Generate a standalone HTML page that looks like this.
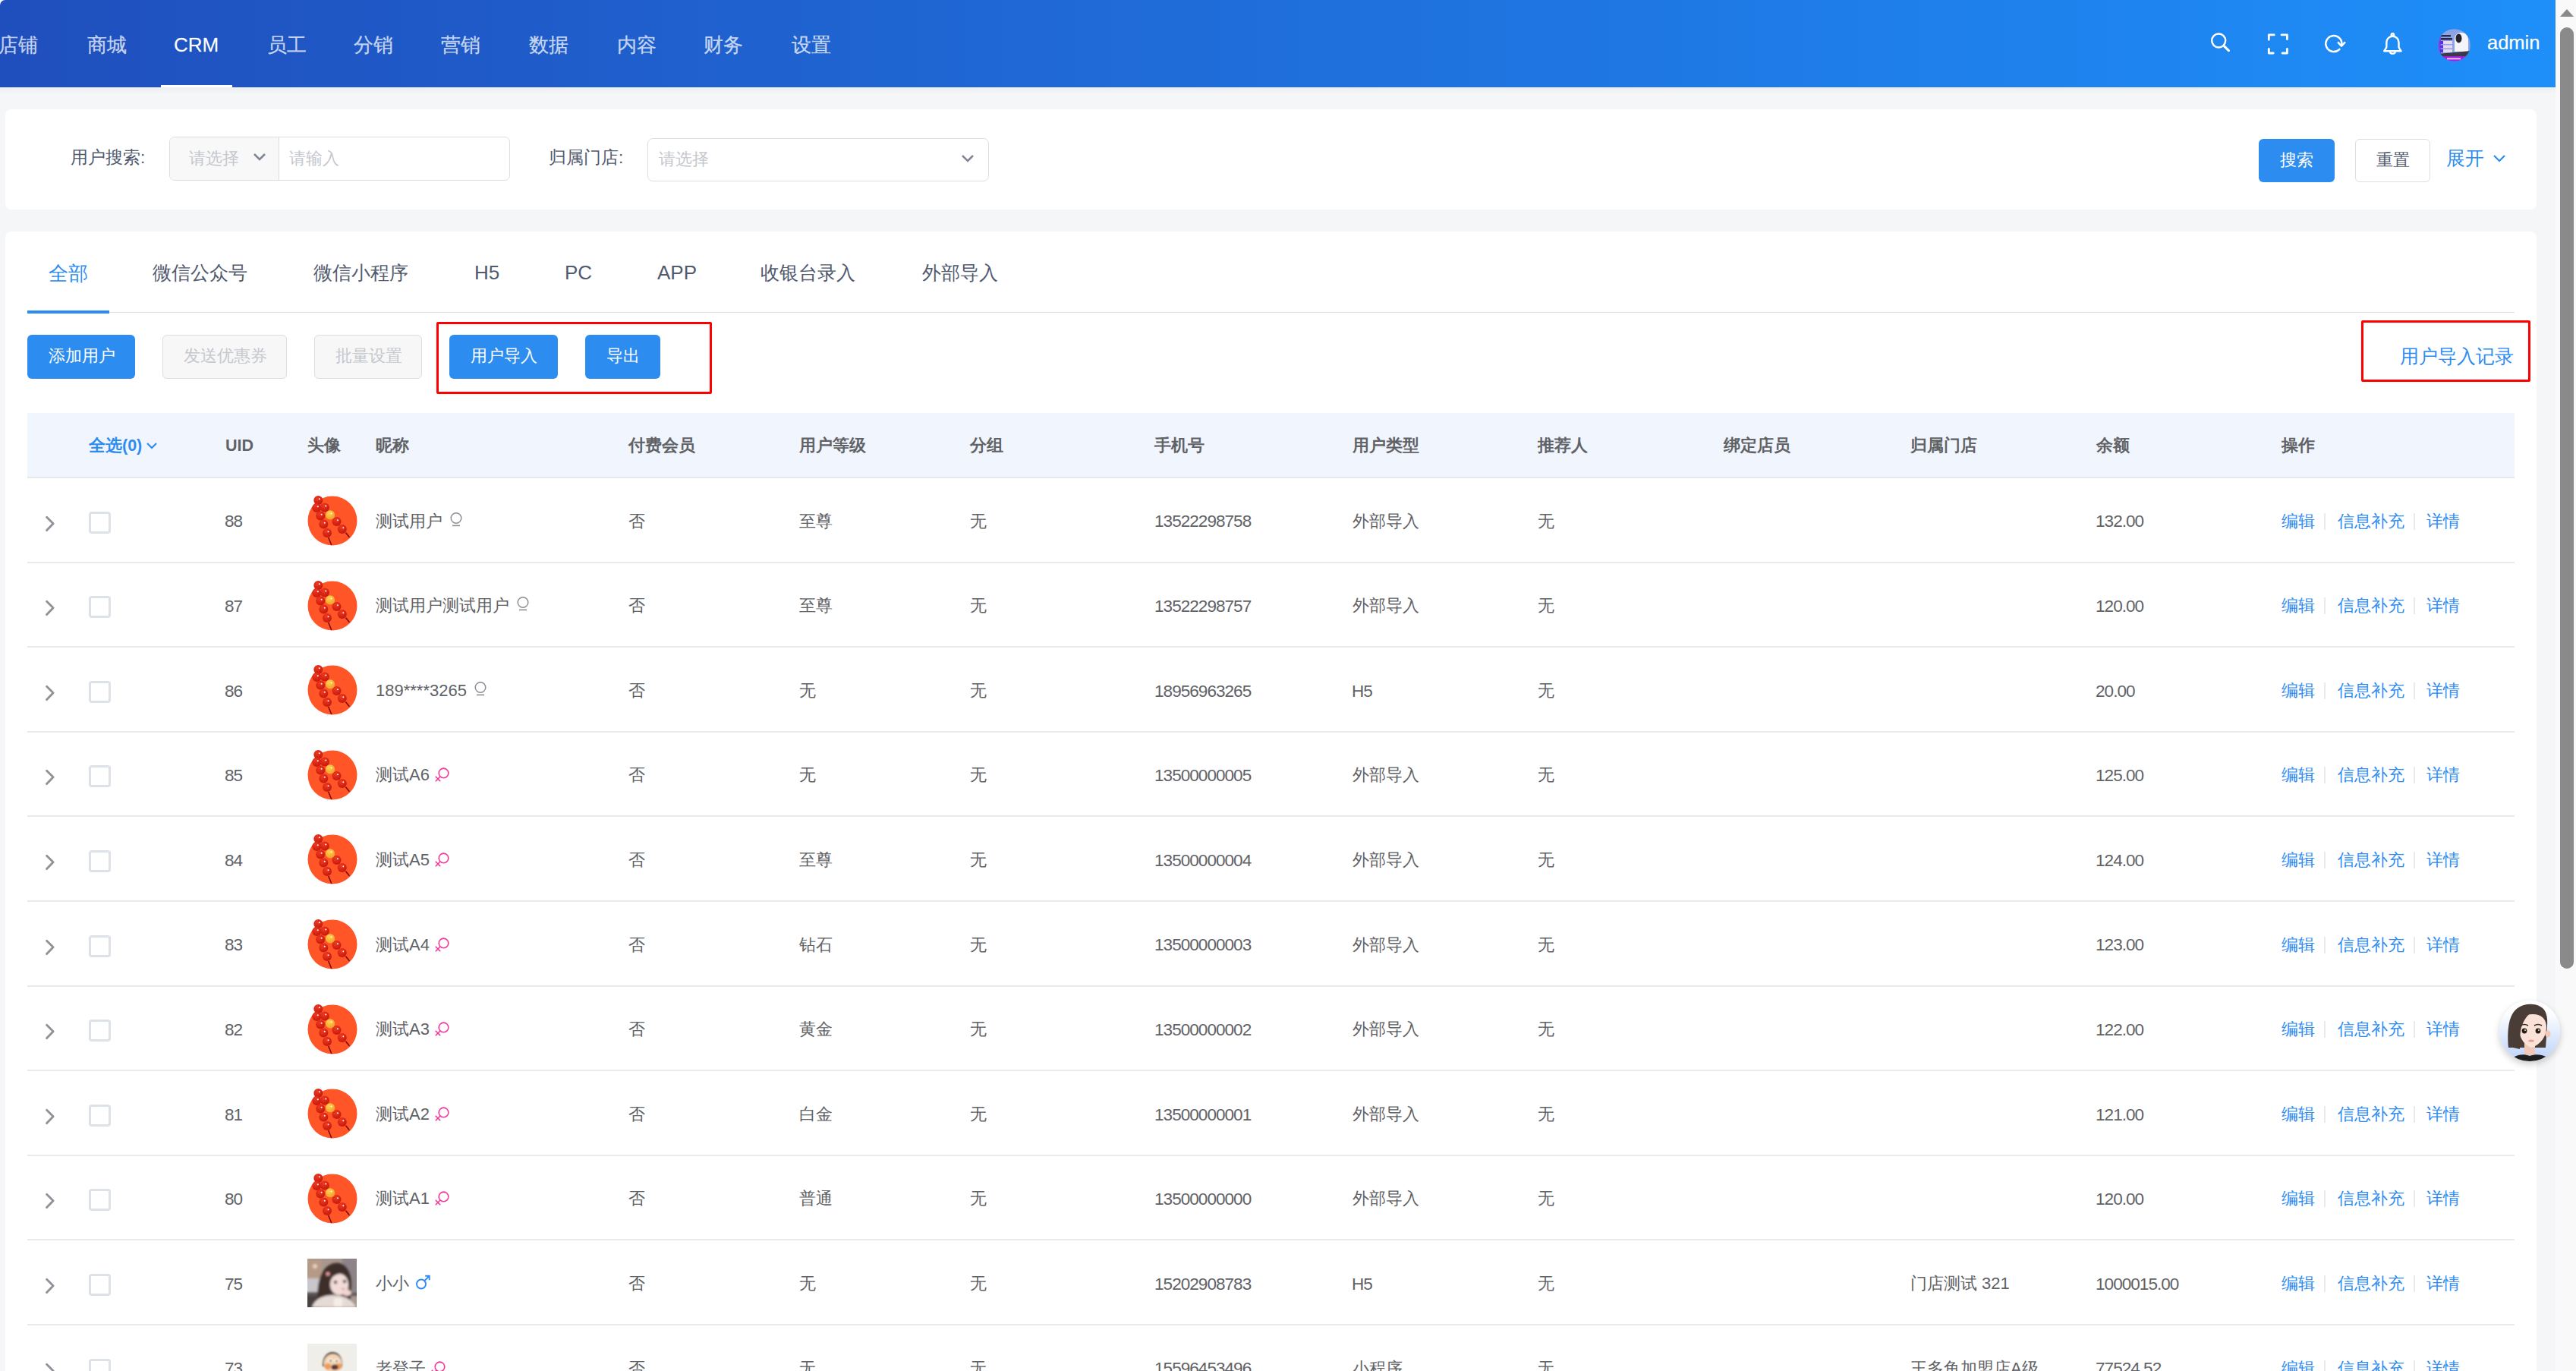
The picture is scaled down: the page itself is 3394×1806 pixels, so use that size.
<!DOCTYPE html><html><head><meta charset="utf-8"><title>CRM</title><style>
*{margin:0;padding:0;box-sizing:border-box}
html,body{width:3394px;height:1806px;overflow:hidden}
body{position:relative;background:#f5f6f8;font-family:"Liberation Sans",sans-serif;color:#515a6e}
.a{position:absolute;white-space:nowrap}
.t{position:absolute;white-space:nowrap;line-height:1}
#hdr{position:absolute;left:0;top:0;width:3367px;height:115px;background:linear-gradient(90deg,#1f4fbd 0%,#1f6bd8 45%,#1e8ff9 100%);border-top-left-radius:7px}
#hdrsh{position:absolute;left:0;top:115px;width:3367px;height:9px;background:linear-gradient(#eceef1,rgba(245,246,248,0))}
.nav{font-size:26px;color:rgba(255,255,255,0.74);top:46px;-webkit-text-stroke:0.3px rgba(255,255,255,0.5)}
.card{position:absolute;background:#fff;border-radius:8px}
.lbl{font-size:22.5px;color:#515a6e}
.ph{font-size:22px;color:#c5c8ce}
.btn{position:absolute;border-radius:6px;background:#2d8cf0;color:#fff}
.btnd{position:absolute;border-radius:6px;background:#f7f7f7;border:1.5px solid #dcdee2;color:#c5c8ce}
.tab{font-size:26px;color:#515a6e;top:347px}
.th{font-size:21.5px;font-weight:bold;color:#606266;top:577px}
.td{font-size:22px;color:#606266}
.num{font-size:22.5px;color:#606266;letter-spacing:-0.95px}
.lnk{font-size:22px;color:#2d8cf0}
.sep{position:absolute;width:2px;height:22px;background:#e8eaec}
.rb{position:absolute;height:2px;background:#e9eaed;left:36px;width:3277px}
.cb{position:absolute;width:29px;height:29px;border:3px solid #dde1e8;border-radius:4px;background:#fff}
</style></head><body><div id="hdr"></div><div id="hdrsh"></div><div class="t nav" style="left:-2px;right:auto;">店铺</div><div class="t nav" style="left:115px">商城</div><div class="t nav" style="left:229px;top:46px;color:#fff">CRM</div><div class="t nav" style="left:352px">员工</div><div class="t nav" style="left:466px">分销</div><div class="t nav" style="left:581px">营销</div><div class="t nav" style="left:697px">数据</div><div class="t nav" style="left:813px">内容</div><div class="t nav" style="left:927px">财务</div><div class="t nav" style="left:1043px">设置</div><div class="a" style="left:212px;top:112px;width:94px;height:3px;background:#fff"></div><svg class="a" style="left:2905px;top:38px" width="45" height="40" viewBox="0 0 45 40" fill="none" stroke="#fff"><circle cx="18.2" cy="15.5" r="9" stroke-width="2.4"/><line x1="24.8" y1="22.2" x2="31.4" y2="28.6" stroke-width="3.2" stroke-linecap="round"/></svg><svg class="a" style="left:2980px;top:38px" width="45" height="40" viewBox="0 0 45 40" fill="none" stroke="#fff" stroke-width="2.8" stroke-linecap="round" stroke-linejoin="round"><path d="M9.3 14.3V7.9H16.2M26 7.9H33.4V13.7M9.3 26.3V32H15.2M33.4 26.3V32H27.1"/></svg><svg class="a" style="left:3055px;top:38px" width="45" height="40" viewBox="0 0 45 40" fill="none" stroke="#fff" stroke-width="2.5" stroke-linecap="round" stroke-linejoin="round"><path d="M30.2 21.4A10.5 10.5 0 1 0 27.4 26.9"/><path d="M25.8 18.2L30 22.6L34.3 18.2"/></svg><svg class="a" style="left:3130px;top:36px" width="45" height="40" viewBox="0 0 45 40" fill="none" stroke="#fff" stroke-width="2.4" stroke-linejoin="round"><path d="M14.3 26.3V19.8A8.1 8.1 0 0 1 30.5 19.8V26.3L33.6 31.3H11.2Z"/><circle cx="22.4" cy="10" r="1.7"/><path d="M18.8 32.2A3.7 3.2 0 0 0 26 32.2"/></svg><svg class="a" style="left:3212px;top:38px" width="43" height="43" viewBox="0 0 43 43"><defs><clipPath id="hc"><circle cx="21.5" cy="21.5" r="21.3"/></clipPath></defs><g clip-path="url(#hc)"><rect width="43" height="43" fill="#8ba4e6"/><rect x="0" y="0" width="4" height="43" fill="#6a4ee0"/><rect x="4" y="8" width="13" height="2.4" fill="#2a2a50"/><rect x="4" y="12" width="15" height="2.6" fill="#2a2a50"/><rect x="3" y="16" width="16" height="4" fill="#e8d8f0"/><rect x="3" y="16" width="4" height="4" fill="#5a2cf0"/><rect x="3" y="21.5" width="16" height="4" fill="#e8d8f0"/><rect x="3" y="21.5" width="4" height="4" fill="#5a2cf0"/><rect x="3" y="27" width="16" height="4" fill="#e8d8f0"/><rect x="3" y="27" width="4" height="4" fill="#5a2cf0"/><path d="M22 30V14C22 8 26 5 31 5C37 5 40 9 40 15V30Z" fill="#f4f4fa"/><ellipse cx="27.5" cy="12.5" rx="4" ry="6" fill="#222230"/><path d="M0 33L43 29V36L0 38Z" fill="#3a3a48"/><rect x="0" y="36" width="43" height="7" fill="#a21ee0"/><rect x="12" y="38.5" width="18" height="1.8" fill="#f0d8f8"/></g></svg><div class="t" style="left:3277px;top:44px;font-size:25.5px;color:#fff;-webkit-text-stroke:0.2px #fff">admin</div><div class="card" style="left:7px;top:144px;width:3335px;height:132px"></div><div class="t lbl" style="left:93px;top:197px">用户搜索:</div><div class="a" style="left:223px;top:180px;width:449px;height:58px;border:1.5px solid #dcdee2;border-radius:7px;background:#fff"></div><div class="a" style="left:224px;top:181px;width:144px;height:56px;border-right:1.5px solid #dcdee2;border-radius:6px 0 0 6px;background:#f8f8f9"></div><div class="t ph" style="left:249px;top:198px">请选择</div><svg class="a" style="left:332px;top:200px" width="20" height="14" viewBox="0 0 20 14" fill="none" stroke="#808695" stroke-width="2.6"><path d="M3 3L10 10L17 3"/></svg><div class="t ph" style="left:381px;top:198px">请输入</div><div class="t lbl" style="left:723px;top:197px">归属门店:</div><div class="a" style="left:853px;top:182px;width:450px;height:57px;border:1.5px solid #dcdee2;border-radius:7px;background:#fff"></div><div class="t ph" style="left:868px;top:199px">请选择</div><svg class="a" style="left:1265px;top:202px" width="20" height="14" viewBox="0 0 20 14" fill="none" stroke="#808695" stroke-width="2.6"><path d="M3 3L10 10L17 3"/></svg><div class="btn" style="left:2976px;top:183px;width:100px;height:57px"></div><div class="t" style="left:3004px;top:200px;font-size:22px;color:#fff">搜索</div><div class="a" style="left:3103px;top:183px;width:99px;height:57px;border:1.5px solid #dcdee2;border-radius:6px;background:#fff"></div><div class="t" style="left:3131px;top:200px;font-size:22px;color:#515a6e">重置</div><div class="t" style="left:3223px;top:196px;font-size:25px;color:#2d8cf0">展开</div><svg class="a" style="left:3283px;top:202px" width="20" height="14" viewBox="0 0 20 14" fill="none" stroke="#2d8cf0" stroke-width="2.2"><path d="M3 3L10 10L17 3"/></svg><div class="card" style="left:7px;top:305px;width:3335px;height:1600px"></div><div class="t tab" style="left:64px;top:347px;font-size:26px;color:#2d8cf0">全部</div><div class="t tab" style="left:201px;top:347px;font-size:25px">微信公众号</div><div class="t tab" style="left:413px;top:347px;font-size:25px">微信小程序</div><div class="t tab" style="left:625px;top:346px;font-size:26px">H5</div><div class="t tab" style="left:744px;top:346px;font-size:26px">PC</div><div class="t tab" style="left:866px;top:346px;font-size:26px">APP</div><div class="t tab" style="left:1002px;top:347px;font-size:25px">收银台录入</div><div class="t tab" style="left:1215px;top:347px;font-size:25px">外部导入</div><div class="a" style="left:36px;top:411px;width:3277px;height:1px;background:#dcdee2"></div><div class="a" style="left:36px;top:409px;width:108px;height:4px;background:#2d8cf0"></div><div class="btn" style="left:36px;top:441px;width:142px;height:58px"></div><div class="t" style="left:64px;top:458px;font-size:22px;color:#fff">添加用户</div><div class="btnd" style="left:214px;top:441px;width:164px;height:58px"></div><div class="t" style="left:242px;top:458px;font-size:22px;color:#c5c8ce">发送优惠券</div><div class="btnd" style="left:414px;top:441px;width:142px;height:58px"></div><div class="t" style="left:442px;top:458px;font-size:22px;color:#c5c8ce">批量设置</div><div class="a" style="left:575px;top:424px;width:363px;height:95px;border:3.5px solid #f00;border-radius:2px"></div><div class="btn" style="left:592px;top:441px;width:143px;height:58px"></div><div class="t" style="left:620px;top:458px;font-size:22px;color:#fff">用户导入</div><div class="btn" style="left:771px;top:441px;width:99px;height:58px"></div><div class="t" style="left:799px;top:458px;font-size:22px;color:#fff">导出</div><div class="a" style="left:3111px;top:422px;width:223px;height:81px;border:3.5px solid #f00;border-radius:2px"></div><div class="t" style="left:3162px;top:457px;font-size:25px;color:#2d8cf0">用户导入记录</div><div class="a" style="left:36px;top:544px;width:3277px;height:86px;background:#f1f6fe;border-bottom:2px solid #e6e8eb"></div><div class="t th" style="left:117px;color:#2d8cf0">全选(0)</div><svg class="a" style="left:192px;top:581px" width="16" height="12" viewBox="0 0 16 12" fill="none" stroke="#2d8cf0" stroke-width="2.2"><path d="M2 3L8 9L14 3"/></svg><div class="t th" style="left:297px">UID</div><div class="t th" style="left:405px">头像</div><div class="t th" style="left:495px">昵称</div><div class="t th" style="left:828px">付费会员</div><div class="t th" style="left:1053px">用户等级</div><div class="t th" style="left:1278px">分组</div><div class="t th" style="left:1521px">手机号</div><div class="t th" style="left:1782px">用户类型</div><div class="t th" style="left:2026px">推荐人</div><div class="t th" style="left:2271px">绑定店员</div><div class="t th" style="left:2517px">归属门店</div><div class="t th" style="left:2762px">余额</div><div class="t th" style="left:3006px">操作</div><svg class="a" style="left:58px;top:674px" width="18" height="28" viewBox="0 0 18 28" fill="none" stroke="#8f9299" stroke-width="2.9" stroke-linecap="round" stroke-linejoin="round"><path d="M3.6 7.3L12.1 15.8L3.6 24.6"/></svg><div class="cb" style="left:117px;top:674px"></div><div class="t num" style="left:296px;top:676px">88</div><svg class="a" style="left:405px;top:653px" width="66" height="66" viewBox="0 0 66 66"><defs><radialGradient id="rb" cx="0.4" cy="0.3" r="0.7"><stop offset="0" stop-color="#ee3a20"/><stop offset="1" stop-color="#c8170e"/></radialGradient><radialGradient id="yb" cx="0.4" cy="0.3" r="0.7"><stop offset="0" stop-color="#fdd24e"/><stop offset="1" stop-color="#f2a12a"/></radialGradient></defs><circle cx="33" cy="33" r="32.5" fill="#ff5527"/><line x1="27.7" y1="55" x2="31.8" y2="65" stroke="#7a0a0a" stroke-width="1.6"/><line x1="50.5" y1="48.7" x2="55.4" y2="54.8" stroke="#7a0a0a" stroke-width="1.6"/><circle cx="14.3" cy="6.1" r="6" fill="url(#rb)"/><circle cx="15.8" cy="4.3" r="1" fill="#fff"/><circle cx="12.3" cy="16" r="6" fill="url(#rb)"/><circle cx="13.8" cy="14.2" r="1" fill="#fff"/><circle cx="22.8" cy="15.4" r="6" fill="url(#rb)"/><circle cx="24.3" cy="13.6" r="1" fill="#fff"/><circle cx="17.2" cy="26.5" r="6" fill="url(#rb)"/><circle cx="18.7" cy="24.7" r="1" fill="#fff"/><circle cx="21.3" cy="37.6" r="6" fill="url(#rb)"/><circle cx="22.8" cy="35.800000000000004" r="1" fill="#fff"/><circle cx="38.5" cy="34.1" r="6" fill="url(#rb)"/><circle cx="40.0" cy="32.300000000000004" r="1" fill="#fff"/><circle cx="26" cy="49" r="6" fill="url(#rb)"/><circle cx="27.5" cy="47.2" r="1" fill="#fff"/><circle cx="45.8" cy="44" r="6" fill="url(#rb)"/><circle cx="47.3" cy="42.2" r="1" fill="#fff"/><circle cx="30.1" cy="25.4" r="6.1" fill="url(#yb)"/><circle cx="31.6" cy="23.6" r="1" fill="#fff"/></svg><div class="t td" style="left:495px;top:676px">测试用户<svg style="position:relative;margin-left:9px;top:-1px;vertical-align:top" width="18" height="22" viewBox="0 0 18 22" fill="none" stroke="#8d8f94" stroke-width="1.5"><circle cx="9" cy="7.5" r="6.8"/><line x1="4" y1="17.4" x2="14" y2="17.4" stroke-width="1.6"/></svg></div><div class="t td" style="left:828px;top:676px">否</div><div class="t td" style="left:1053px;top:676px">至尊</div><div class="t td" style="left:1278px;top:676px">无</div><div class="t num" style="left:1521px;top:676px">13522298758</div><div class="t td" style="left:1782px;top:676px">外部导入</div><div class="t td" style="left:2026px;top:676px">无</div><div class="t num" style="left:2761px;top:676px">132.00</div><div class="t lnk" style="left:3006px;top:676px">编辑</div><div class="sep" style="left:3062px;top:676px"></div><div class="t lnk" style="left:3080px;top:676px">信息补充</div><div class="sep" style="left:3180px;top:676px"></div><div class="t lnk" style="left:3197px;top:676px">详情</div><div class="rb" style="top:740px"></div><svg class="a" style="left:58px;top:785px" width="18" height="28" viewBox="0 0 18 28" fill="none" stroke="#8f9299" stroke-width="2.9" stroke-linecap="round" stroke-linejoin="round"><path d="M3.6 7.3L12.1 15.8L3.6 24.6"/></svg><div class="cb" style="left:117px;top:785px"></div><div class="t num" style="left:296px;top:788px">87</div><svg class="a" style="left:405px;top:765px" width="66" height="66" viewBox="0 0 66 66"><defs><radialGradient id="rb" cx="0.4" cy="0.3" r="0.7"><stop offset="0" stop-color="#ee3a20"/><stop offset="1" stop-color="#c8170e"/></radialGradient><radialGradient id="yb" cx="0.4" cy="0.3" r="0.7"><stop offset="0" stop-color="#fdd24e"/><stop offset="1" stop-color="#f2a12a"/></radialGradient></defs><circle cx="33" cy="33" r="32.5" fill="#ff5527"/><line x1="27.7" y1="55" x2="31.8" y2="65" stroke="#7a0a0a" stroke-width="1.6"/><line x1="50.5" y1="48.7" x2="55.4" y2="54.8" stroke="#7a0a0a" stroke-width="1.6"/><circle cx="14.3" cy="6.1" r="6" fill="url(#rb)"/><circle cx="15.8" cy="4.3" r="1" fill="#fff"/><circle cx="12.3" cy="16" r="6" fill="url(#rb)"/><circle cx="13.8" cy="14.2" r="1" fill="#fff"/><circle cx="22.8" cy="15.4" r="6" fill="url(#rb)"/><circle cx="24.3" cy="13.6" r="1" fill="#fff"/><circle cx="17.2" cy="26.5" r="6" fill="url(#rb)"/><circle cx="18.7" cy="24.7" r="1" fill="#fff"/><circle cx="21.3" cy="37.6" r="6" fill="url(#rb)"/><circle cx="22.8" cy="35.800000000000004" r="1" fill="#fff"/><circle cx="38.5" cy="34.1" r="6" fill="url(#rb)"/><circle cx="40.0" cy="32.300000000000004" r="1" fill="#fff"/><circle cx="26" cy="49" r="6" fill="url(#rb)"/><circle cx="27.5" cy="47.2" r="1" fill="#fff"/><circle cx="45.8" cy="44" r="6" fill="url(#rb)"/><circle cx="47.3" cy="42.2" r="1" fill="#fff"/><circle cx="30.1" cy="25.4" r="6.1" fill="url(#yb)"/><circle cx="31.6" cy="23.6" r="1" fill="#fff"/></svg><div class="t td" style="left:495px;top:787px">测试用户测试用户<svg style="position:relative;margin-left:9px;top:-1px;vertical-align:top" width="18" height="22" viewBox="0 0 18 22" fill="none" stroke="#8d8f94" stroke-width="1.5"><circle cx="9" cy="7.5" r="6.8"/><line x1="4" y1="17.4" x2="14" y2="17.4" stroke-width="1.6"/></svg></div><div class="t td" style="left:828px;top:787px">否</div><div class="t td" style="left:1053px;top:787px">至尊</div><div class="t td" style="left:1278px;top:787px">无</div><div class="t num" style="left:1521px;top:788px">13522298757</div><div class="t td" style="left:1782px;top:787px">外部导入</div><div class="t td" style="left:2026px;top:787px">无</div><div class="t num" style="left:2761px;top:788px">120.00</div><div class="t lnk" style="left:3006px;top:787px">编辑</div><div class="sep" style="left:3062px;top:787px"></div><div class="t lnk" style="left:3080px;top:787px">信息补充</div><div class="sep" style="left:3180px;top:787px"></div><div class="t lnk" style="left:3197px;top:787px">详情</div><div class="rb" style="top:851px"></div><svg class="a" style="left:58px;top:897px" width="18" height="28" viewBox="0 0 18 28" fill="none" stroke="#8f9299" stroke-width="2.9" stroke-linecap="round" stroke-linejoin="round"><path d="M3.6 7.3L12.1 15.8L3.6 24.6"/></svg><div class="cb" style="left:117px;top:897px"></div><div class="t num" style="left:296px;top:900px">86</div><svg class="a" style="left:405px;top:876px" width="66" height="66" viewBox="0 0 66 66"><defs><radialGradient id="rb" cx="0.4" cy="0.3" r="0.7"><stop offset="0" stop-color="#ee3a20"/><stop offset="1" stop-color="#c8170e"/></radialGradient><radialGradient id="yb" cx="0.4" cy="0.3" r="0.7"><stop offset="0" stop-color="#fdd24e"/><stop offset="1" stop-color="#f2a12a"/></radialGradient></defs><circle cx="33" cy="33" r="32.5" fill="#ff5527"/><line x1="27.7" y1="55" x2="31.8" y2="65" stroke="#7a0a0a" stroke-width="1.6"/><line x1="50.5" y1="48.7" x2="55.4" y2="54.8" stroke="#7a0a0a" stroke-width="1.6"/><circle cx="14.3" cy="6.1" r="6" fill="url(#rb)"/><circle cx="15.8" cy="4.3" r="1" fill="#fff"/><circle cx="12.3" cy="16" r="6" fill="url(#rb)"/><circle cx="13.8" cy="14.2" r="1" fill="#fff"/><circle cx="22.8" cy="15.4" r="6" fill="url(#rb)"/><circle cx="24.3" cy="13.6" r="1" fill="#fff"/><circle cx="17.2" cy="26.5" r="6" fill="url(#rb)"/><circle cx="18.7" cy="24.7" r="1" fill="#fff"/><circle cx="21.3" cy="37.6" r="6" fill="url(#rb)"/><circle cx="22.8" cy="35.800000000000004" r="1" fill="#fff"/><circle cx="38.5" cy="34.1" r="6" fill="url(#rb)"/><circle cx="40.0" cy="32.300000000000004" r="1" fill="#fff"/><circle cx="26" cy="49" r="6" fill="url(#rb)"/><circle cx="27.5" cy="47.2" r="1" fill="#fff"/><circle cx="45.8" cy="44" r="6" fill="url(#rb)"/><circle cx="47.3" cy="42.2" r="1" fill="#fff"/><circle cx="30.1" cy="25.4" r="6.1" fill="url(#yb)"/><circle cx="31.6" cy="23.6" r="1" fill="#fff"/></svg><div class="t td" style="left:495px;top:899px">189****3265<svg style="position:relative;margin-left:9px;top:-1px;vertical-align:top" width="18" height="22" viewBox="0 0 18 22" fill="none" stroke="#8d8f94" stroke-width="1.5"><circle cx="9" cy="7.5" r="6.8"/><line x1="4" y1="17.4" x2="14" y2="17.4" stroke-width="1.6"/></svg></div><div class="t td" style="left:828px;top:899px">否</div><div class="t td" style="left:1053px;top:899px">无</div><div class="t td" style="left:1278px;top:899px">无</div><div class="t num" style="left:1521px;top:900px">18956963265</div><div class="t num" style="left:1781px;top:900px">H5</div><div class="t td" style="left:2026px;top:899px">无</div><div class="t num" style="left:2761px;top:900px">20.00</div><div class="t lnk" style="left:3006px;top:899px">编辑</div><div class="sep" style="left:3062px;top:899px"></div><div class="t lnk" style="left:3080px;top:899px">信息补充</div><div class="sep" style="left:3180px;top:899px"></div><div class="t lnk" style="left:3197px;top:899px">详情</div><div class="rb" style="top:963px"></div><svg class="a" style="left:58px;top:1008px" width="18" height="28" viewBox="0 0 18 28" fill="none" stroke="#8f9299" stroke-width="2.9" stroke-linecap="round" stroke-linejoin="round"><path d="M3.6 7.3L12.1 15.8L3.6 24.6"/></svg><div class="cb" style="left:117px;top:1008px"></div><div class="t num" style="left:296px;top:1011px">85</div><svg class="a" style="left:405px;top:988px" width="66" height="66" viewBox="0 0 66 66"><defs><radialGradient id="rb" cx="0.4" cy="0.3" r="0.7"><stop offset="0" stop-color="#ee3a20"/><stop offset="1" stop-color="#c8170e"/></radialGradient><radialGradient id="yb" cx="0.4" cy="0.3" r="0.7"><stop offset="0" stop-color="#fdd24e"/><stop offset="1" stop-color="#f2a12a"/></radialGradient></defs><circle cx="33" cy="33" r="32.5" fill="#ff5527"/><line x1="27.7" y1="55" x2="31.8" y2="65" stroke="#7a0a0a" stroke-width="1.6"/><line x1="50.5" y1="48.7" x2="55.4" y2="54.8" stroke="#7a0a0a" stroke-width="1.6"/><circle cx="14.3" cy="6.1" r="6" fill="url(#rb)"/><circle cx="15.8" cy="4.3" r="1" fill="#fff"/><circle cx="12.3" cy="16" r="6" fill="url(#rb)"/><circle cx="13.8" cy="14.2" r="1" fill="#fff"/><circle cx="22.8" cy="15.4" r="6" fill="url(#rb)"/><circle cx="24.3" cy="13.6" r="1" fill="#fff"/><circle cx="17.2" cy="26.5" r="6" fill="url(#rb)"/><circle cx="18.7" cy="24.7" r="1" fill="#fff"/><circle cx="21.3" cy="37.6" r="6" fill="url(#rb)"/><circle cx="22.8" cy="35.800000000000004" r="1" fill="#fff"/><circle cx="38.5" cy="34.1" r="6" fill="url(#rb)"/><circle cx="40.0" cy="32.300000000000004" r="1" fill="#fff"/><circle cx="26" cy="49" r="6" fill="url(#rb)"/><circle cx="27.5" cy="47.2" r="1" fill="#fff"/><circle cx="45.8" cy="44" r="6" fill="url(#rb)"/><circle cx="47.3" cy="42.2" r="1" fill="#fff"/><circle cx="30.1" cy="25.4" r="6.1" fill="url(#yb)"/><circle cx="31.6" cy="23.6" r="1" fill="#fff"/></svg><div class="t td" style="left:495px;top:1010px">测试A6<svg style="position:relative;margin-left:6px;top:1px;vertical-align:top" width="20" height="20" viewBox="0 0 20 20" fill="none" stroke="#f5379b" stroke-width="1.6"><circle cx="12.5" cy="7.4" r="6.3"/><line x1="8" y1="12" x2="1.8" y2="18.2"/><line x1="1.8" y1="11.8" x2="8.2" y2="18.2"/></svg></div><div class="t td" style="left:828px;top:1010px">否</div><div class="t td" style="left:1053px;top:1010px">无</div><div class="t td" style="left:1278px;top:1010px">无</div><div class="t num" style="left:1521px;top:1011px">13500000005</div><div class="t td" style="left:1782px;top:1010px">外部导入</div><div class="t td" style="left:2026px;top:1010px">无</div><div class="t num" style="left:2761px;top:1011px">125.00</div><div class="t lnk" style="left:3006px;top:1010px">编辑</div><div class="sep" style="left:3062px;top:1010px"></div><div class="t lnk" style="left:3080px;top:1010px">信息补充</div><div class="sep" style="left:3180px;top:1010px"></div><div class="t lnk" style="left:3197px;top:1010px">详情</div><div class="rb" style="top:1074px"></div><svg class="a" style="left:58px;top:1120px" width="18" height="28" viewBox="0 0 18 28" fill="none" stroke="#8f9299" stroke-width="2.9" stroke-linecap="round" stroke-linejoin="round"><path d="M3.6 7.3L12.1 15.8L3.6 24.6"/></svg><div class="cb" style="left:117px;top:1120px"></div><div class="t num" style="left:296px;top:1123px">84</div><svg class="a" style="left:405px;top:1099px" width="66" height="66" viewBox="0 0 66 66"><defs><radialGradient id="rb" cx="0.4" cy="0.3" r="0.7"><stop offset="0" stop-color="#ee3a20"/><stop offset="1" stop-color="#c8170e"/></radialGradient><radialGradient id="yb" cx="0.4" cy="0.3" r="0.7"><stop offset="0" stop-color="#fdd24e"/><stop offset="1" stop-color="#f2a12a"/></radialGradient></defs><circle cx="33" cy="33" r="32.5" fill="#ff5527"/><line x1="27.7" y1="55" x2="31.8" y2="65" stroke="#7a0a0a" stroke-width="1.6"/><line x1="50.5" y1="48.7" x2="55.4" y2="54.8" stroke="#7a0a0a" stroke-width="1.6"/><circle cx="14.3" cy="6.1" r="6" fill="url(#rb)"/><circle cx="15.8" cy="4.3" r="1" fill="#fff"/><circle cx="12.3" cy="16" r="6" fill="url(#rb)"/><circle cx="13.8" cy="14.2" r="1" fill="#fff"/><circle cx="22.8" cy="15.4" r="6" fill="url(#rb)"/><circle cx="24.3" cy="13.6" r="1" fill="#fff"/><circle cx="17.2" cy="26.5" r="6" fill="url(#rb)"/><circle cx="18.7" cy="24.7" r="1" fill="#fff"/><circle cx="21.3" cy="37.6" r="6" fill="url(#rb)"/><circle cx="22.8" cy="35.800000000000004" r="1" fill="#fff"/><circle cx="38.5" cy="34.1" r="6" fill="url(#rb)"/><circle cx="40.0" cy="32.300000000000004" r="1" fill="#fff"/><circle cx="26" cy="49" r="6" fill="url(#rb)"/><circle cx="27.5" cy="47.2" r="1" fill="#fff"/><circle cx="45.8" cy="44" r="6" fill="url(#rb)"/><circle cx="47.3" cy="42.2" r="1" fill="#fff"/><circle cx="30.1" cy="25.4" r="6.1" fill="url(#yb)"/><circle cx="31.6" cy="23.6" r="1" fill="#fff"/></svg><div class="t td" style="left:495px;top:1122px">测试A5<svg style="position:relative;margin-left:6px;top:1px;vertical-align:top" width="20" height="20" viewBox="0 0 20 20" fill="none" stroke="#f5379b" stroke-width="1.6"><circle cx="12.5" cy="7.4" r="6.3"/><line x1="8" y1="12" x2="1.8" y2="18.2"/><line x1="1.8" y1="11.8" x2="8.2" y2="18.2"/></svg></div><div class="t td" style="left:828px;top:1122px">否</div><div class="t td" style="left:1053px;top:1122px">至尊</div><div class="t td" style="left:1278px;top:1122px">无</div><div class="t num" style="left:1521px;top:1123px">13500000004</div><div class="t td" style="left:1782px;top:1122px">外部导入</div><div class="t td" style="left:2026px;top:1122px">无</div><div class="t num" style="left:2761px;top:1123px">124.00</div><div class="t lnk" style="left:3006px;top:1122px">编辑</div><div class="sep" style="left:3062px;top:1122px"></div><div class="t lnk" style="left:3080px;top:1122px">信息补充</div><div class="sep" style="left:3180px;top:1122px"></div><div class="t lnk" style="left:3197px;top:1122px">详情</div><div class="rb" style="top:1186px"></div><svg class="a" style="left:58px;top:1232px" width="18" height="28" viewBox="0 0 18 28" fill="none" stroke="#8f9299" stroke-width="2.9" stroke-linecap="round" stroke-linejoin="round"><path d="M3.6 7.3L12.1 15.8L3.6 24.6"/></svg><div class="cb" style="left:117px;top:1232px"></div><div class="t num" style="left:296px;top:1234px">83</div><svg class="a" style="left:405px;top:1211px" width="66" height="66" viewBox="0 0 66 66"><defs><radialGradient id="rb" cx="0.4" cy="0.3" r="0.7"><stop offset="0" stop-color="#ee3a20"/><stop offset="1" stop-color="#c8170e"/></radialGradient><radialGradient id="yb" cx="0.4" cy="0.3" r="0.7"><stop offset="0" stop-color="#fdd24e"/><stop offset="1" stop-color="#f2a12a"/></radialGradient></defs><circle cx="33" cy="33" r="32.5" fill="#ff5527"/><line x1="27.7" y1="55" x2="31.8" y2="65" stroke="#7a0a0a" stroke-width="1.6"/><line x1="50.5" y1="48.7" x2="55.4" y2="54.8" stroke="#7a0a0a" stroke-width="1.6"/><circle cx="14.3" cy="6.1" r="6" fill="url(#rb)"/><circle cx="15.8" cy="4.3" r="1" fill="#fff"/><circle cx="12.3" cy="16" r="6" fill="url(#rb)"/><circle cx="13.8" cy="14.2" r="1" fill="#fff"/><circle cx="22.8" cy="15.4" r="6" fill="url(#rb)"/><circle cx="24.3" cy="13.6" r="1" fill="#fff"/><circle cx="17.2" cy="26.5" r="6" fill="url(#rb)"/><circle cx="18.7" cy="24.7" r="1" fill="#fff"/><circle cx="21.3" cy="37.6" r="6" fill="url(#rb)"/><circle cx="22.8" cy="35.800000000000004" r="1" fill="#fff"/><circle cx="38.5" cy="34.1" r="6" fill="url(#rb)"/><circle cx="40.0" cy="32.300000000000004" r="1" fill="#fff"/><circle cx="26" cy="49" r="6" fill="url(#rb)"/><circle cx="27.5" cy="47.2" r="1" fill="#fff"/><circle cx="45.8" cy="44" r="6" fill="url(#rb)"/><circle cx="47.3" cy="42.2" r="1" fill="#fff"/><circle cx="30.1" cy="25.4" r="6.1" fill="url(#yb)"/><circle cx="31.6" cy="23.6" r="1" fill="#fff"/></svg><div class="t td" style="left:495px;top:1234px">测试A4<svg style="position:relative;margin-left:6px;top:1px;vertical-align:top" width="20" height="20" viewBox="0 0 20 20" fill="none" stroke="#f5379b" stroke-width="1.6"><circle cx="12.5" cy="7.4" r="6.3"/><line x1="8" y1="12" x2="1.8" y2="18.2"/><line x1="1.8" y1="11.8" x2="8.2" y2="18.2"/></svg></div><div class="t td" style="left:828px;top:1234px">否</div><div class="t td" style="left:1053px;top:1234px">钻石</div><div class="t td" style="left:1278px;top:1234px">无</div><div class="t num" style="left:1521px;top:1234px">13500000003</div><div class="t td" style="left:1782px;top:1234px">外部导入</div><div class="t td" style="left:2026px;top:1234px">无</div><div class="t num" style="left:2761px;top:1234px">123.00</div><div class="t lnk" style="left:3006px;top:1234px">编辑</div><div class="sep" style="left:3062px;top:1234px"></div><div class="t lnk" style="left:3080px;top:1234px">信息补充</div><div class="sep" style="left:3180px;top:1234px"></div><div class="t lnk" style="left:3197px;top:1234px">详情</div><div class="rb" style="top:1298px"></div><svg class="a" style="left:58px;top:1343px" width="18" height="28" viewBox="0 0 18 28" fill="none" stroke="#8f9299" stroke-width="2.9" stroke-linecap="round" stroke-linejoin="round"><path d="M3.6 7.3L12.1 15.8L3.6 24.6"/></svg><div class="cb" style="left:117px;top:1343px"></div><div class="t num" style="left:296px;top:1346px">82</div><svg class="a" style="left:405px;top:1323px" width="66" height="66" viewBox="0 0 66 66"><defs><radialGradient id="rb" cx="0.4" cy="0.3" r="0.7"><stop offset="0" stop-color="#ee3a20"/><stop offset="1" stop-color="#c8170e"/></radialGradient><radialGradient id="yb" cx="0.4" cy="0.3" r="0.7"><stop offset="0" stop-color="#fdd24e"/><stop offset="1" stop-color="#f2a12a"/></radialGradient></defs><circle cx="33" cy="33" r="32.5" fill="#ff5527"/><line x1="27.7" y1="55" x2="31.8" y2="65" stroke="#7a0a0a" stroke-width="1.6"/><line x1="50.5" y1="48.7" x2="55.4" y2="54.8" stroke="#7a0a0a" stroke-width="1.6"/><circle cx="14.3" cy="6.1" r="6" fill="url(#rb)"/><circle cx="15.8" cy="4.3" r="1" fill="#fff"/><circle cx="12.3" cy="16" r="6" fill="url(#rb)"/><circle cx="13.8" cy="14.2" r="1" fill="#fff"/><circle cx="22.8" cy="15.4" r="6" fill="url(#rb)"/><circle cx="24.3" cy="13.6" r="1" fill="#fff"/><circle cx="17.2" cy="26.5" r="6" fill="url(#rb)"/><circle cx="18.7" cy="24.7" r="1" fill="#fff"/><circle cx="21.3" cy="37.6" r="6" fill="url(#rb)"/><circle cx="22.8" cy="35.800000000000004" r="1" fill="#fff"/><circle cx="38.5" cy="34.1" r="6" fill="url(#rb)"/><circle cx="40.0" cy="32.300000000000004" r="1" fill="#fff"/><circle cx="26" cy="49" r="6" fill="url(#rb)"/><circle cx="27.5" cy="47.2" r="1" fill="#fff"/><circle cx="45.8" cy="44" r="6" fill="url(#rb)"/><circle cx="47.3" cy="42.2" r="1" fill="#fff"/><circle cx="30.1" cy="25.4" r="6.1" fill="url(#yb)"/><circle cx="31.6" cy="23.6" r="1" fill="#fff"/></svg><div class="t td" style="left:495px;top:1345px">测试A3<svg style="position:relative;margin-left:6px;top:1px;vertical-align:top" width="20" height="20" viewBox="0 0 20 20" fill="none" stroke="#f5379b" stroke-width="1.6"><circle cx="12.5" cy="7.4" r="6.3"/><line x1="8" y1="12" x2="1.8" y2="18.2"/><line x1="1.8" y1="11.8" x2="8.2" y2="18.2"/></svg></div><div class="t td" style="left:828px;top:1345px">否</div><div class="t td" style="left:1053px;top:1345px">黄金</div><div class="t td" style="left:1278px;top:1345px">无</div><div class="t num" style="left:1521px;top:1346px">13500000002</div><div class="t td" style="left:1782px;top:1345px">外部导入</div><div class="t td" style="left:2026px;top:1345px">无</div><div class="t num" style="left:2761px;top:1346px">122.00</div><div class="t lnk" style="left:3006px;top:1345px">编辑</div><div class="sep" style="left:3062px;top:1345px"></div><div class="t lnk" style="left:3080px;top:1345px">信息补充</div><div class="sep" style="left:3180px;top:1345px"></div><div class="t lnk" style="left:3197px;top:1345px">详情</div><div class="rb" style="top:1409px"></div><svg class="a" style="left:58px;top:1455px" width="18" height="28" viewBox="0 0 18 28" fill="none" stroke="#8f9299" stroke-width="2.9" stroke-linecap="round" stroke-linejoin="round"><path d="M3.6 7.3L12.1 15.8L3.6 24.6"/></svg><div class="cb" style="left:117px;top:1455px"></div><div class="t num" style="left:296px;top:1458px">81</div><svg class="a" style="left:405px;top:1434px" width="66" height="66" viewBox="0 0 66 66"><defs><radialGradient id="rb" cx="0.4" cy="0.3" r="0.7"><stop offset="0" stop-color="#ee3a20"/><stop offset="1" stop-color="#c8170e"/></radialGradient><radialGradient id="yb" cx="0.4" cy="0.3" r="0.7"><stop offset="0" stop-color="#fdd24e"/><stop offset="1" stop-color="#f2a12a"/></radialGradient></defs><circle cx="33" cy="33" r="32.5" fill="#ff5527"/><line x1="27.7" y1="55" x2="31.8" y2="65" stroke="#7a0a0a" stroke-width="1.6"/><line x1="50.5" y1="48.7" x2="55.4" y2="54.8" stroke="#7a0a0a" stroke-width="1.6"/><circle cx="14.3" cy="6.1" r="6" fill="url(#rb)"/><circle cx="15.8" cy="4.3" r="1" fill="#fff"/><circle cx="12.3" cy="16" r="6" fill="url(#rb)"/><circle cx="13.8" cy="14.2" r="1" fill="#fff"/><circle cx="22.8" cy="15.4" r="6" fill="url(#rb)"/><circle cx="24.3" cy="13.6" r="1" fill="#fff"/><circle cx="17.2" cy="26.5" r="6" fill="url(#rb)"/><circle cx="18.7" cy="24.7" r="1" fill="#fff"/><circle cx="21.3" cy="37.6" r="6" fill="url(#rb)"/><circle cx="22.8" cy="35.800000000000004" r="1" fill="#fff"/><circle cx="38.5" cy="34.1" r="6" fill="url(#rb)"/><circle cx="40.0" cy="32.300000000000004" r="1" fill="#fff"/><circle cx="26" cy="49" r="6" fill="url(#rb)"/><circle cx="27.5" cy="47.2" r="1" fill="#fff"/><circle cx="45.8" cy="44" r="6" fill="url(#rb)"/><circle cx="47.3" cy="42.2" r="1" fill="#fff"/><circle cx="30.1" cy="25.4" r="6.1" fill="url(#yb)"/><circle cx="31.6" cy="23.6" r="1" fill="#fff"/></svg><div class="t td" style="left:495px;top:1457px">测试A2<svg style="position:relative;margin-left:6px;top:1px;vertical-align:top" width="20" height="20" viewBox="0 0 20 20" fill="none" stroke="#f5379b" stroke-width="1.6"><circle cx="12.5" cy="7.4" r="6.3"/><line x1="8" y1="12" x2="1.8" y2="18.2"/><line x1="1.8" y1="11.8" x2="8.2" y2="18.2"/></svg></div><div class="t td" style="left:828px;top:1457px">否</div><div class="t td" style="left:1053px;top:1457px">白金</div><div class="t td" style="left:1278px;top:1457px">无</div><div class="t num" style="left:1521px;top:1458px">13500000001</div><div class="t td" style="left:1782px;top:1457px">外部导入</div><div class="t td" style="left:2026px;top:1457px">无</div><div class="t num" style="left:2761px;top:1458px">121.00</div><div class="t lnk" style="left:3006px;top:1457px">编辑</div><div class="sep" style="left:3062px;top:1457px"></div><div class="t lnk" style="left:3080px;top:1457px">信息补充</div><div class="sep" style="left:3180px;top:1457px"></div><div class="t lnk" style="left:3197px;top:1457px">详情</div><div class="rb" style="top:1521px"></div><svg class="a" style="left:58px;top:1566px" width="18" height="28" viewBox="0 0 18 28" fill="none" stroke="#8f9299" stroke-width="2.9" stroke-linecap="round" stroke-linejoin="round"><path d="M3.6 7.3L12.1 15.8L3.6 24.6"/></svg><div class="cb" style="left:117px;top:1566px"></div><div class="t num" style="left:296px;top:1569px">80</div><svg class="a" style="left:405px;top:1546px" width="66" height="66" viewBox="0 0 66 66"><defs><radialGradient id="rb" cx="0.4" cy="0.3" r="0.7"><stop offset="0" stop-color="#ee3a20"/><stop offset="1" stop-color="#c8170e"/></radialGradient><radialGradient id="yb" cx="0.4" cy="0.3" r="0.7"><stop offset="0" stop-color="#fdd24e"/><stop offset="1" stop-color="#f2a12a"/></radialGradient></defs><circle cx="33" cy="33" r="32.5" fill="#ff5527"/><line x1="27.7" y1="55" x2="31.8" y2="65" stroke="#7a0a0a" stroke-width="1.6"/><line x1="50.5" y1="48.7" x2="55.4" y2="54.8" stroke="#7a0a0a" stroke-width="1.6"/><circle cx="14.3" cy="6.1" r="6" fill="url(#rb)"/><circle cx="15.8" cy="4.3" r="1" fill="#fff"/><circle cx="12.3" cy="16" r="6" fill="url(#rb)"/><circle cx="13.8" cy="14.2" r="1" fill="#fff"/><circle cx="22.8" cy="15.4" r="6" fill="url(#rb)"/><circle cx="24.3" cy="13.6" r="1" fill="#fff"/><circle cx="17.2" cy="26.5" r="6" fill="url(#rb)"/><circle cx="18.7" cy="24.7" r="1" fill="#fff"/><circle cx="21.3" cy="37.6" r="6" fill="url(#rb)"/><circle cx="22.8" cy="35.800000000000004" r="1" fill="#fff"/><circle cx="38.5" cy="34.1" r="6" fill="url(#rb)"/><circle cx="40.0" cy="32.300000000000004" r="1" fill="#fff"/><circle cx="26" cy="49" r="6" fill="url(#rb)"/><circle cx="27.5" cy="47.2" r="1" fill="#fff"/><circle cx="45.8" cy="44" r="6" fill="url(#rb)"/><circle cx="47.3" cy="42.2" r="1" fill="#fff"/><circle cx="30.1" cy="25.4" r="6.1" fill="url(#yb)"/><circle cx="31.6" cy="23.6" r="1" fill="#fff"/></svg><div class="t td" style="left:495px;top:1568px">测试A1<svg style="position:relative;margin-left:6px;top:1px;vertical-align:top" width="20" height="20" viewBox="0 0 20 20" fill="none" stroke="#f5379b" stroke-width="1.6"><circle cx="12.5" cy="7.4" r="6.3"/><line x1="8" y1="12" x2="1.8" y2="18.2"/><line x1="1.8" y1="11.8" x2="8.2" y2="18.2"/></svg></div><div class="t td" style="left:828px;top:1568px">否</div><div class="t td" style="left:1053px;top:1568px">普通</div><div class="t td" style="left:1278px;top:1568px">无</div><div class="t num" style="left:1521px;top:1569px">13500000000</div><div class="t td" style="left:1782px;top:1568px">外部导入</div><div class="t td" style="left:2026px;top:1568px">无</div><div class="t num" style="left:2761px;top:1569px">120.00</div><div class="t lnk" style="left:3006px;top:1568px">编辑</div><div class="sep" style="left:3062px;top:1568px"></div><div class="t lnk" style="left:3080px;top:1568px">信息补充</div><div class="sep" style="left:3180px;top:1568px"></div><div class="t lnk" style="left:3197px;top:1568px">详情</div><div class="rb" style="top:1632px"></div><svg class="a" style="left:58px;top:1678px" width="18" height="28" viewBox="0 0 18 28" fill="none" stroke="#8f9299" stroke-width="2.9" stroke-linecap="round" stroke-linejoin="round"><path d="M3.6 7.3L12.1 15.8L3.6 24.6"/></svg><div class="cb" style="left:117px;top:1678px"></div><div class="t num" style="left:296px;top:1681px">75</div><svg class="a" style="left:405px;top:1658px" width="65" height="64" viewBox="0 0 65 64"><defs><filter id="gbl" x="-10%" y="-10%" width="120%" height="120%"><feGaussianBlur stdDeviation="1.6"/></filter><clipPath id="gcl"><rect width="65" height="64"/></clipPath></defs><g clip-path="url(#gcl)"><rect width="65" height="64" fill="#a89890"/><g filter="url(#gbl)"><rect x="-3" y="-3" width="22" height="30" fill="#b59a88"/><rect x="-3" y="26" width="20" height="20" fill="#c9c6cc"/><rect x="-3" y="44" width="20" height="22" fill="#4a4040"/><rect x="46" y="-3" width="22" height="50" fill="#8c8488"/><rect x="-3" y="45" width="70" height="4" fill="#5a5458"/><circle cx="10" cy="10" r="3" fill="#e8d0b8"/><path d="M14 60C12 40 14 12 34 6C52 2 60 20 58 40L56 60Z" fill="#3e2e2c"/><path d="M46 20C52 26 56 36 55 48L50 48C50 36 48 28 44 22Z" fill="#9a7c6c"/><ellipse cx="42" cy="34" rx="12" ry="14" fill="#f2dcd8"/><path d="M28 22C34 14 46 12 54 20C50 18 40 18 30 26Z" fill="#3e2e2c"/><circle cx="37" cy="31" r="2.2" fill="#3a3040"/><circle cx="49" cy="30" r="2.2" fill="#3a3040"/><ellipse cx="47" cy="40" rx="2" ry="1.2" fill="#d89090"/><path d="M6 64C10 52 22 48 34 48C46 48 58 52 64 64Z" fill="#e6dad6"/><rect x="35" y="52" width="11" height="12" rx="2" fill="#f4eee6"/><ellipse cx="52" cy="45" rx="6" ry="4" fill="#f0d6d0"/><circle cx="27" cy="20" r="2.6" fill="#e89a9a"/></g></g></svg><div class="t td" style="left:495px;top:1680px">小小<svg style="position:relative;margin-left:8px;top:-2.5px;vertical-align:top" width="22" height="22" viewBox="0 0 22 22" fill="none" stroke="#2d8cf0" stroke-width="1.9"><circle cx="8" cy="13.5" r="6"/><path d="M12.3 9.2L18.5 3M13.2 2.8H18.7V8.3"/></svg></div><div class="t td" style="left:828px;top:1680px">否</div><div class="t td" style="left:1053px;top:1680px">无</div><div class="t td" style="left:1278px;top:1680px">无</div><div class="t num" style="left:1521px;top:1681px">15202908783</div><div class="t num" style="left:1781px;top:1681px">H5</div><div class="t td" style="left:2026px;top:1680px">无</div><div class="t td" style="left:2517px;top:1680px">门店测试 321</div><div class="t num" style="left:2761px;top:1681px">1000015.00</div><div class="t lnk" style="left:3006px;top:1680px">编辑</div><div class="sep" style="left:3062px;top:1680px"></div><div class="t lnk" style="left:3080px;top:1680px">信息补充</div><div class="sep" style="left:3180px;top:1680px"></div><div class="t lnk" style="left:3197px;top:1680px">详情</div><div class="rb" style="top:1744px"></div><svg class="a" style="left:58px;top:1790px" width="18" height="28" viewBox="0 0 18 28" fill="none" stroke="#8f9299" stroke-width="2.9" stroke-linecap="round" stroke-linejoin="round"><path d="M3.6 7.3L12.1 15.8L3.6 24.6"/></svg><div class="cb" style="left:117px;top:1790px"></div><div class="t num" style="left:296px;top:1792px">73</div><svg class="a" style="left:405px;top:1770px" width="65" height="64" viewBox="0 0 65 64"><defs><filter id="obl" x="-20%" y="-20%" width="140%" height="140%"><feGaussianBlur stdDeviation="0.9"/></filter></defs><rect width="65" height="64" fill="#efeee9"/><g filter="url(#obl)"><path d="M20 30C19 18 26 11 33 11C41 11 47 18 46 30Z" fill="#5a4a44"/><ellipse cx="33.5" cy="26" rx="12" ry="12.5" fill="#f2d2b4"/><ellipse cx="30" cy="22" rx="3.5" ry="2.8" fill="#fdf0dc"/><ellipse cx="38" cy="22.5" rx="3.5" ry="2.8" fill="#fdf0dc"/><circle cx="30.5" cy="22.5" r="1.2" fill="#333"/><circle cx="38.5" cy="23" r="1.2" fill="#333"/><ellipse cx="27" cy="30" rx="4.5" ry="4" fill="#ef9a5c"/><ellipse cx="41" cy="30" rx="4.5" ry="4" fill="#ef9a5c"/><ellipse cx="36" cy="31" rx="4.5" ry="3.6" fill="#4a3a34"/><ellipse cx="36.5" cy="32" rx="1.6" ry="2" fill="#8a2a20"/><rect x="24" y="38" width="20" height="10" fill="#5a5054"/></g></svg><div class="t td" style="left:495px;top:1792px">老登子<svg style="position:relative;margin-left:6px;top:1px;vertical-align:top" width="20" height="20" viewBox="0 0 20 20" fill="none" stroke="#f5379b" stroke-width="1.6"><circle cx="12.5" cy="7.4" r="6.3"/><line x1="8" y1="12" x2="1.8" y2="18.2"/><line x1="1.8" y1="11.8" x2="8.2" y2="18.2"/></svg></div><div class="t td" style="left:828px;top:1792px">否</div><div class="t td" style="left:1053px;top:1792px">无</div><div class="t td" style="left:1278px;top:1792px">无</div><div class="t num" style="left:1521px;top:1792px">15596453496</div><div class="t td" style="left:1782px;top:1792px">小程序</div><div class="t td" style="left:2026px;top:1792px">无</div><div class="t td" style="left:2517px;top:1792px">王多鱼加盟店A级</div><div class="t num" style="left:2761px;top:1792px">77524.52</div><div class="t lnk" style="left:3006px;top:1792px">编辑</div><div class="sep" style="left:3062px;top:1792px"></div><div class="t lnk" style="left:3080px;top:1792px">信息补充</div><div class="sep" style="left:3180px;top:1792px"></div><div class="t lnk" style="left:3197px;top:1792px">详情</div><div class="rb" style="top:1856px"></div><div class="a" style="left:3367px;top:0;width:27px;height:1806px;background:#f9f9f9"></div><svg class="a" style="left:3372px;top:10px" width="20" height="14" viewBox="0 0 20 14"><path d="M1 12H19L10 2Z" fill="#8a8a8a"/></svg><div class="a" style="left:3373px;top:36px;width:18px;height:1240px;border-radius:9px;background:#8a8a8a"></div><div class="a" style="left:3293px;top:1318px;width:80px;height:80px;border-radius:50%;box-shadow:0 4px 10px rgba(0,0,0,0.2);overflow:hidden;background:linear-gradient(#fff 18%,#bcd2fb 100%)"><svg width="80" height="80" viewBox="0 0 80 80"><path d="M12 62C10 40 12 18 24 10C32 4 46 3 54 8C62 12 64 22 63 34L61 62Z" fill="#4a3c36"/><rect x="33" y="56" width="14" height="16" fill="#f0c8b8"/><path d="M16 76C24 71 32 70 40 73C48 70 56 71 64 75L64 82L16 82Z" fill="#1e1e1e"/><path d="M25 32C25 22 33 18 44 18C56 18 62 25 62 35C62 47 55 58 42 62C31 58 25 46 25 32Z" fill="#fbe2d8"/><ellipse cx="64" cy="44" rx="3.6" ry="4.6" fill="#f3c8b6"/><path d="M47 6C35 9 24 18 21 34L18 62L27 64C27 50 27 38 31 30C35 21 41 15 49 11Z" fill="#4a3c36"/><path d="M46 7C56 11 62 19 63 34L62 26C58 19 52 15 46 13Z" fill="#4a3c36"/><path d="M28 33Q33 30 38 33" stroke="#3a2a24" stroke-width="1.6" fill="none"/><path d="M46 33Q51 30 56 33" stroke="#3a2a24" stroke-width="1.6" fill="none"/><circle cx="33" cy="40" r="3.4" fill="#2a1e1a"/><circle cx="51" cy="40" r="3.4" fill="#2a1e1a"/><circle cx="34" cy="39" r="0.9" fill="#fff"/><circle cx="52" cy="39" r="0.9" fill="#fff"/><ellipse cx="42" cy="53" rx="3.8" ry="1.6" fill="#e79a88"/></svg></div></body></html>
